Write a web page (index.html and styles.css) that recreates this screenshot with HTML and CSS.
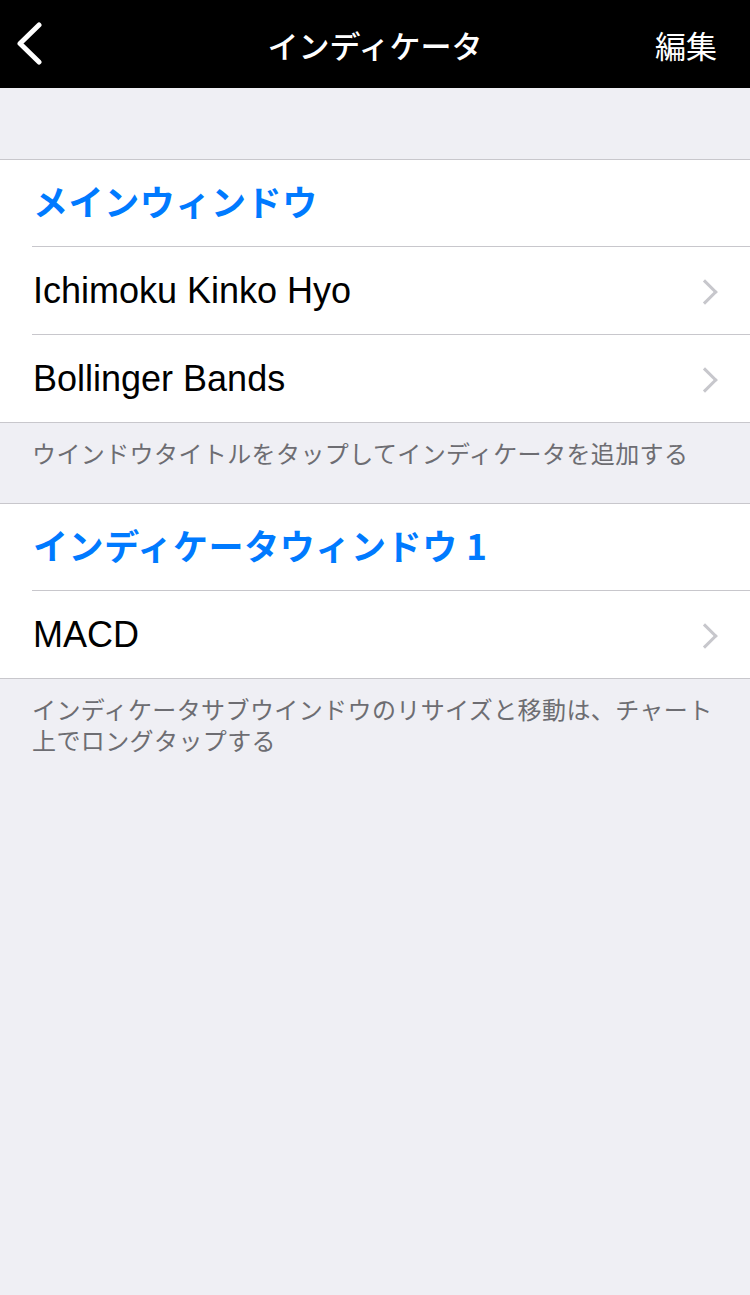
FILE: index.html
```html
<!DOCTYPE html>
<html lang="ja">

<head>
  <meta charset="UTF-8">
  <meta name="viewport" content="width=device-width, initial-scale=1">
  <title>インディケータ</title>
  <link rel="stylesheet" href="styles.css">
</head>

<body>
  <header class="navbar">
    <button class="back" aria-label="戻る">
      <svg width="30" height="50" viewBox="0 0 30 50">
        <polyline points="22,6 3,24.5 22,43" fill="none" stroke="#fff" stroke-width="5" stroke-linecap="round" stroke-linejoin="round"/>
      </svg>
    </button>
    <h1>インディケータ</h1>
    <button class="edit">編集</button>
  </header>

  <main>
    <section class="group">
      <div class="row heading"><div class="cell">メインウィンドウ</div></div>
      <div class="row"><div class="cell">Ichimoku Kinko Hyo<span class="chev"></span></div></div>
      <div class="row"><div class="cell">Bollinger Bands<span class="chev"></span></div></div>
    </section>
    <p class="footer">ウインドウタイトルをタップしてインディケータを追加する</p>

    <section class="group">
      <div class="row heading"><div class="cell">インディケータウィンドウ 1</div></div>
      <div class="row"><div class="cell">MACD<span class="chev"></span></div></div>
    </section>
    <p class="footer">インディケータサブウインドウのリサイズと移動は、チャート上でロングタップする</p>
  </main>
</body>

</html>
```

FILE: styles.css
```css
*{
  box-sizing: border-box;
  margin: 0;
  padding: 0;
}

body{
  background: #efeff4;
  font-family: "Liberation Sans", "Noto Sans CJK JP", sans-serif;
  height: 1295px;
}

.navbar{
  height: 88px;
  background: #000;
  color: #fff;
  display: grid;
  grid-template-columns: 1fr auto 1fr;
  align-items: center;
  font-family: "Noto Sans CJK JP", sans-serif;
}
.navbar h1{
  font-size: 31px;
  font-weight: 500;
  line-height: 1;
}
.navbar button{
  background: none;
  border: 0;
  color: #fff;
  font-family: inherit;
}
.back{
  justify-self: start;
  padding-left: 17px;
  display: flex;
}
.edit{
  justify-self: end;
  padding-right: 33px;
  font-size: 31px;
  line-height: 1;
}

main{
  padding-top: 71px;
}

.group{
  background: #fff;
  border-top: 1px solid #c8c7cc;
  border-bottom: 1px solid #c8c7cc;
}
.row{
  padding-left: 32px;
}
.cell{
  height: 88px;
  display: flex;
  align-items: center;
  justify-content: space-between;
  padding-left: 1px;
  padding-right: 32px;
  border-bottom: 1px solid #c8c7cc;
  font-size: 36px;
  color: #000;
}
.row:last-child .cell{
  border-bottom: 0;
  height: 87px;
}
.heading .cell{
  height: 87px;
  padding-bottom: 6px;
  color: #007aff;
  font-weight: 700;
  font-size: 35px;
  letter-spacing: 0.6px;
  font-family: "Noto Sans CJK JP", sans-serif;
}

.chev{
  width: 16px;
  height: 26px;
  position: relative;
}
.chev::before{
  content: "";
  position: absolute;
  width: 15px;
  height: 15px;
  top: 5px;
  left: -6px;
  border-top: 3px solid #c7c7cc;
  border-right: 3px solid #c7c7cc;
  transform: rotate(45deg);
}

.footer{
  padding: 14px 30px 35px 32px;
  font-family: "Noto Sans CJK JP", sans-serif;
  font-size: 24px;
  letter-spacing: 0.4px;
  line-height: 31px;
  color: #6d6d72;
}
```
